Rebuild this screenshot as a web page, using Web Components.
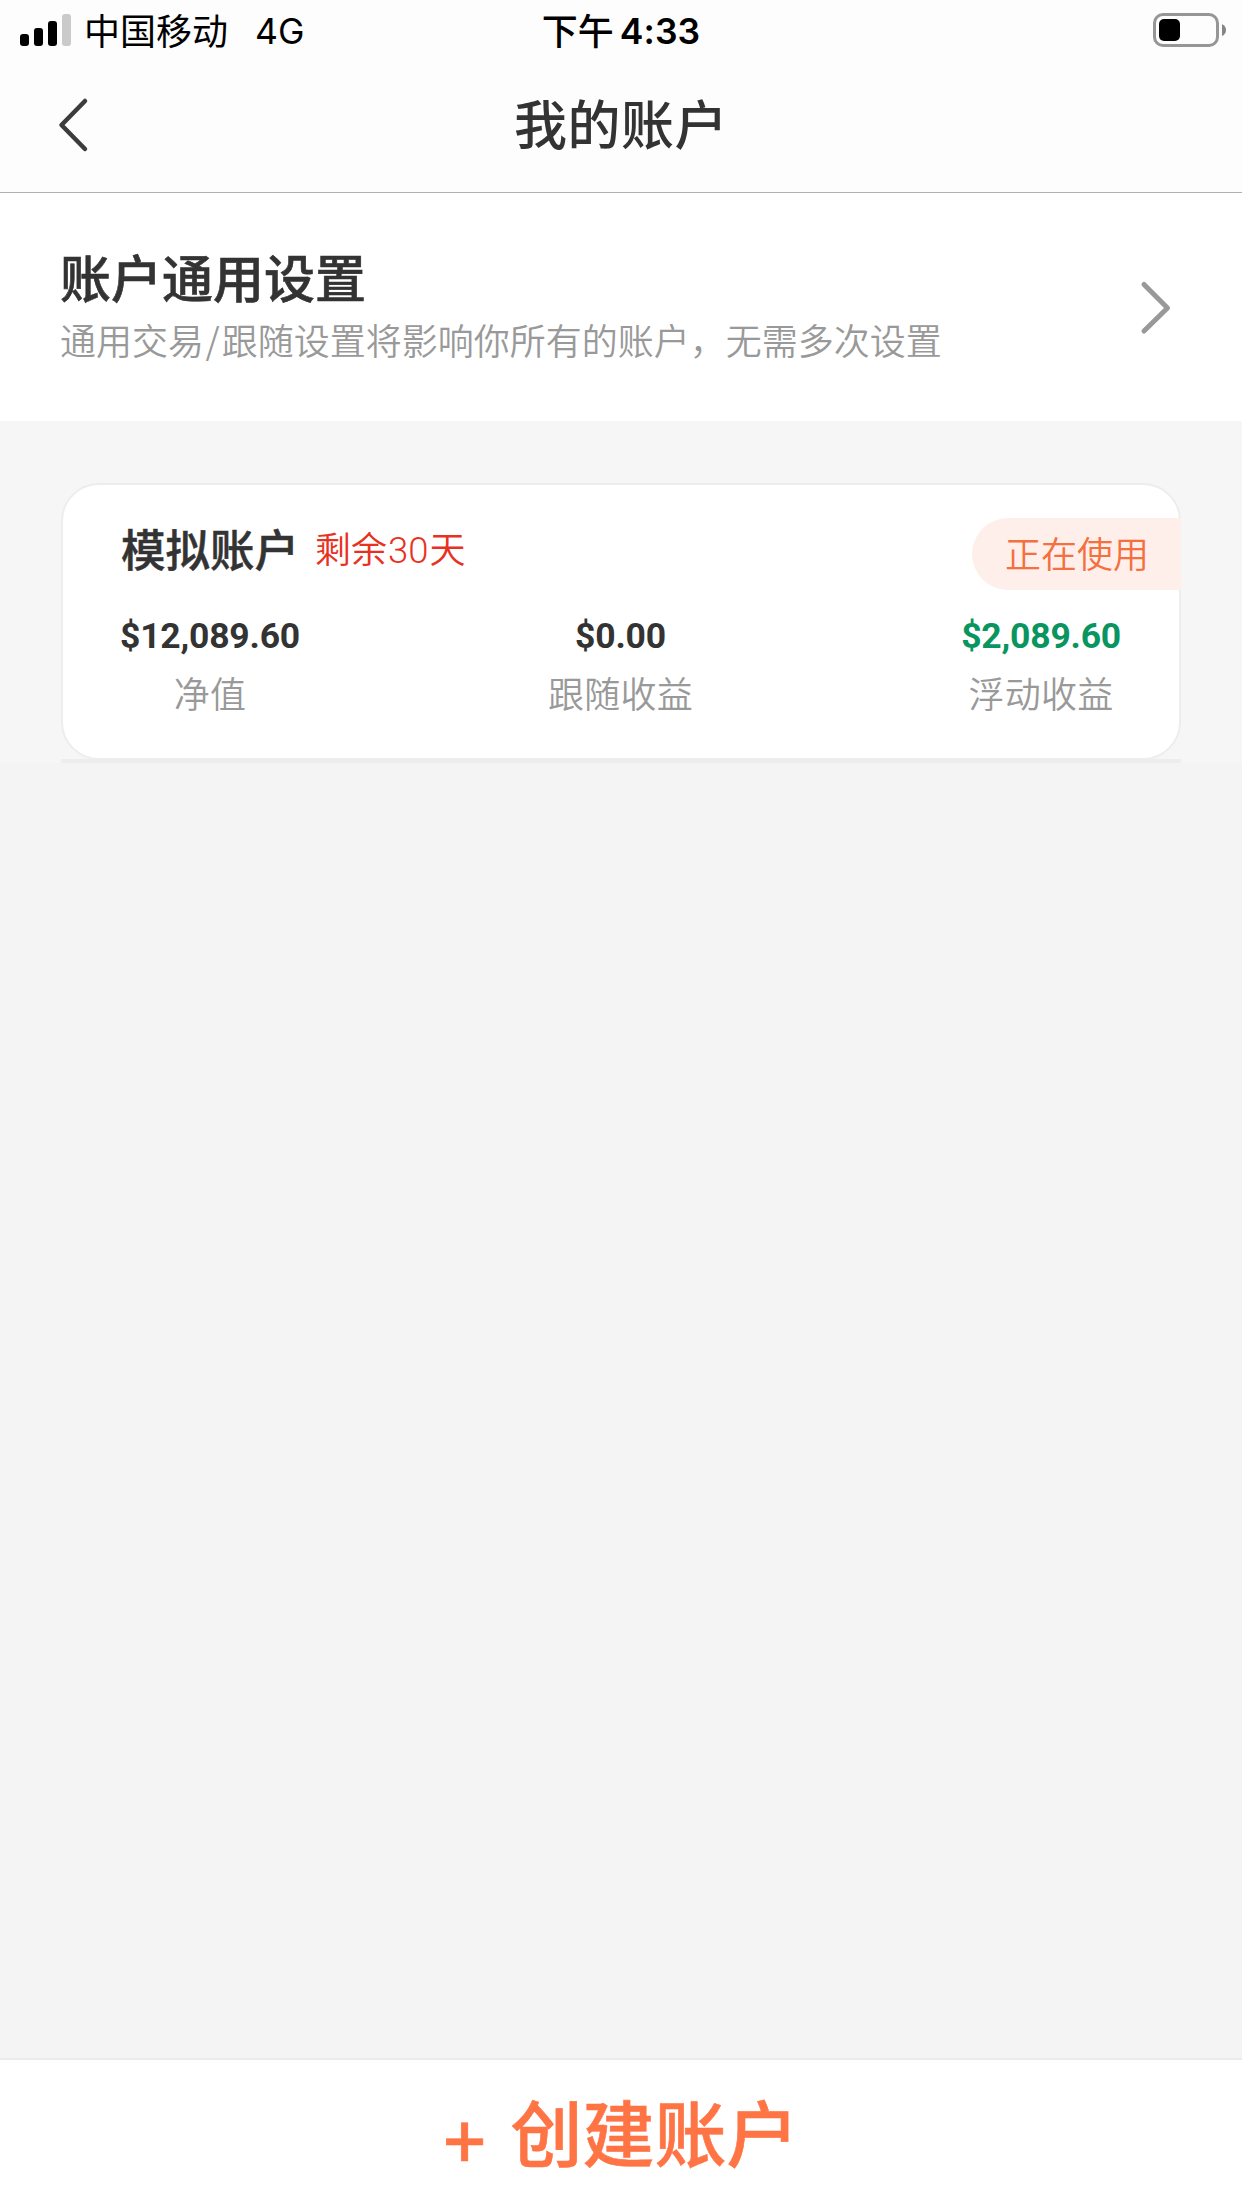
<!DOCTYPE html>
<html lang="zh-CN">
<head>
<meta charset="utf-8">
<title>我的账户</title>
<style>
html,body{margin:0;padding:0}
body{width:1242px;height:2208px;overflow:hidden;background:#f4f4f4;font-family:"Noto Sans CJK SC","Liberation Sans",sans-serif;color:#333}
</style>
</head>
<body>
<account-page></account-page>
<script>
function define(name, html) {
  const t = document.createElement('template');
  t.innerHTML = html;
  customElements.define(name, class extends HTMLElement {
    constructor() {
      super();
      this.attachShadow({mode: 'open'}).appendChild(t.content.cloneNode(true));
    }
  });
}

define('status-bar', `
<style>
:host{display:grid;grid-template-columns:1fr auto 1fr;height:58px;line-height:58px;align-items:center;font-size:36px;color:#000;white-space:pre}
.left{display:flex;align-items:center;padding-left:20px}
.signal{display:block;margin-right:12px}
.net{font-family:Inter,sans-serif;font-size:35.5px;margin:3px 0 -3px 27px}
.time{display:flex;font-weight:500}
.clock{font-family:Inter,sans-serif;font-weight:600;font-size:35.5px;margin:3px 0 -3px 6px;letter-spacing:.1px}
.right{display:flex;justify-content:flex-end;padding:2px 15px 0 0}
svg{display:block}
</style>
<div class="left">
<svg class="signal" width="52" height="58" viewBox="0 0 52 58"><rect x="0" y="34" width="9" height="12" rx="3"/><rect x="14" y="28" width="9" height="18" rx="3"/><rect x="28" y="21" width="9" height="25" rx="3"/><rect x="42" y="14" width="9" height="32" rx="3" fill="#cacaca"/></svg>
<slot name="carrier"></slot><span class="net"><slot name="net"></slot></span></div>
<div class="time"><slot name="period"></slot><span class="clock"><slot name="clock"></slot></span></div>
<div class="right"><svg width="74" height="36" viewBox="0 0 74 36"><rect x="1.5" y="2.5" width="63" height="31" rx="8.5" fill="none" stroke="#969696" stroke-width="3"/><rect x="6" y="7" width="21" height="22" rx="5"/><path d="M69 12Q73 14 73 18T69 24Z" fill="#858585"/></svg></div>
`);

define('nav-bar', `
<style>
:host{display:grid;grid-template-columns:1fr auto 1fr;height:134px;border-bottom:1px solid #b0b0b0;background:#fdfdfd}
h1{margin:0;font-size:53px;line-height:128px;font-weight:500;letter-spacing:.5px}
svg{display:block;margin:38px 0 0 55px}
</style>
<svg width="36" height="60" viewBox="0 0 36 60"><path d="M30 5L6.500 29L30 53" fill="none" stroke="#3c3c3c" stroke-width="4.500" stroke-linecap="round" stroke-linejoin="round"/></svg>
<h1><slot></slot></h1><span></span>
`);

define('settings-row', `
<style>
:host{display:flex;box-sizing:border-box;height:228px;padding:50px 69px 0 60px;justify-content:space-between;background:#fff}
h2{margin:0;font-size:51px;line-height:66px;font-weight:500;-webkit-text-stroke:.6px currentColor}
p{margin:0;padding-top:6px;font-size:36px;line-height:48px;font-weight:350;color:#999}
svg{display:block;margin-top:34px}
</style>
<div><h2><slot name="title"></slot></h2><p><slot name="note"></slot></p></div>
<svg width="36" height="60" viewBox="0 0 36 60"><path d="M7 7.500L30.500 31L7 54" fill="none" stroke="#999" stroke-width="5" stroke-linecap="round" stroke-linejoin="round"/></svg>
`);

define('money-stat', `
<style>
:host{display:flex;flex-direction:column;align-items:center;width:max-content}
.value{font:700 35.500px/48px Roboto,sans-serif;letter-spacing:-.2px}
.label{font-size:36px;line-height:48px;padding-top:8px;font-weight:350;color:#999;letter-spacing:.3px}
</style>
<div class="value"><slot name="value"></slot></div><div class="label"><slot></slot></div>
`);

define('account-card', `
<style>
:host{display:block;background:#f6f6f6;padding:62px 61px 0 61px}
.card{box-sizing:border-box;height:277px;border:2px solid #ededed;border-radius:38px;background:#fff;padding-top:33px}
header{display:flex;height:72px;justify-content:space-between;margin-right:-2px}
.name{display:flex;align-items:center;height:60px;padding-left:58px}
h3{margin:0;font-size:44.500px;font-weight:500;line-height:60px;-webkit-text-stroke:.5px currentColor}
.days{margin-left:16px;color:#e8321f;font-size:36px;line-height:58px;height:60px;font-weight:350}
.tag{box-sizing:border-box;width:209px;height:72px;border-radius:36px 0 0 36px;background:#ffefeb;color:#f4703f;font-size:36px;line-height:69px;font-weight:350;padding-left:33px}
.stats{display:grid;grid-template-columns:repeat(3,1fr);padding:22px 58px 0 57px}
::slotted([slot=a]){justify-self:start}
::slotted([slot=b]){justify-self:center}
::slotted([slot=c]){justify-self:end}
.rule{height:4px;background:#ededed;margin-top:-1px}
</style>
<div class="card"><header><div class="name"><h3><slot name="name"></slot></h3><div class="days"><slot name="days"></slot></div></div><div class="tag"><slot name="tag"></slot></div></header>
<div class="stats"><slot name="a"></slot><slot name="b"></slot><slot name="c"></slot></div></div>
<div class="rule"></div>
`);

define('create-button', `
<style>
:host{display:flex;box-sizing:border-box;height:150px;border-top:2px solid #ebebeb;background:#fff;color:#ff7444;justify-content:center;font-size:72px;font-weight:500;-webkit-text-stroke:.6px currentColor;line-height:139px}
.plus{font-size:74px;padding-top:7px;margin-right:25px}
</style>
<span class="plus"><slot name="plus"></slot></span><span><slot></slot></span>
`);

define('account-page', `
<style>
:host{display:flex;flex-direction:column;width:1242px;height:2208px;background:#f4f4f4}
status-bar{background:#fdfdfd}
create-button{margin-top:auto}
.green{color:#089560}
.slash{margin:0 2px 0 1.5px}
.num{font-family:Roboto,sans-serif;font-weight:350;font-size:36.500px;line-height:0;margin:0 1px}
</style>
<status-bar><span slot="carrier">中国移动</span><span slot="net">4G</span><span slot="period">下午</span><span slot="clock">4:33</span></status-bar>
<nav-bar>我的账户</nav-bar>
<settings-row><span slot="title">账户通用设置</span><span slot="note">通用交易<span class="slash">/</span>跟随设置将影响你所有的账户，无需多次设置</span></settings-row>
<account-card><span slot="name">模拟账户</span><span slot="days">剩余<span class="num">30</span>天</span><span slot="tag">正在使用</span>
<money-stat slot="a"><span slot="value">$12,089.60</span>净值</money-stat>
<money-stat slot="b"><span slot="value">$0.00</span>跟随收益</money-stat>
<money-stat slot="c"><span slot="value" class="green">$2,089.60</span>浮动收益</money-stat>
</account-card>
<create-button><span slot="plus">+</span>创建账户</create-button>
`);
</script>
</body>
</html>
